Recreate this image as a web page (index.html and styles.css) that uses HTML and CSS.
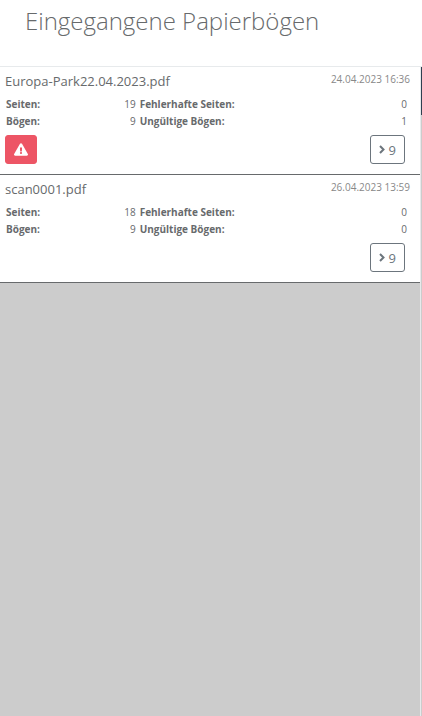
FILE: index.html
```
<!DOCTYPE html>
<html lang="de">

<head>
    <meta charset="UTF-8">
    <meta name="viewport" content="width=device-width, initial-scale=1.0">
    <title>Eingegangene Papierbögen</title>
    <link rel="stylesheet" href="styles.css">
</head>

<body>
    <header class="page-heading">
        <h2>Eingegangene Papierbögen</h2>
    </header>

    <main class="content">
        <div class="scan-list">
            <article class="scan">
                <div class="scan-title">
                    <h3>Europa-Park22.04.2023.pdf</h3>
                    <time datetime="2023-04-24T16:36">24.04.2023 16:36</time>
                </div>
                <table class="scan-stats">
                    <tr>
                        <th scope="row">Seiten:</th>
                        <td>19</td>
                        <th scope="row">Fehlerhafte Seiten:</th>
                        <td>0</td>
                    </tr>
                    <tr>
                        <th scope="row">Bögen:</th>
                        <td>9</td>
                        <th scope="row">Ungültige Bögen:</th>
                        <td>1</td>
                    </tr>
                </table>
                <div class="scan-actions">
                    <button class="btn btn-danger" type="button" aria-label="Fehler anzeigen">
                        <svg class="icon-warning" viewBox="0 0 576 512" aria-hidden="true">
                            <path d="M569.5 440c18.500 32-4.700 72-41.600 72H48.100c-36.900 0-60-40.100-41.600-72L246.400 24c18.500-32 64.700-32 83.200 0zM288 354a46 46 0 1 0 0 92 46 46 0 0 0 0-92zm-43.700-165.300l7.400 136c.4 6.400 5.600 11.300 12 11.300h48.600c6.400 0 11.600-5 12-11.300l7.400-136c.4-6.900-5.100-12.700-12-12.700h-63.400c-6.900 0-12.400 5.800-12 12.700z" />
                        </svg>
                    </button>
                    <button class="btn btn-outline" type="button">
                        <svg class="icon-chevron" viewBox="0 0 6 9" aria-hidden="true">
                            <path d="M1 1l3.500 3.500L1 8" />
                        </svg>
                        9
                    </button>
                </div>
            </article>

            <article class="scan">
                <div class="scan-title">
                    <h3>scan0001.pdf</h3>
                    <time datetime="2023-04-26T13:59">26.04.2023 13:59</time>
                </div>
                <table class="scan-stats">
                    <tr>
                        <th scope="row">Seiten:</th>
                        <td>18</td>
                        <th scope="row">Fehlerhafte Seiten:</th>
                        <td>0</td>
                    </tr>
                    <tr>
                        <th scope="row">Bögen:</th>
                        <td>9</td>
                        <th scope="row">Ungültige Bögen:</th>
                        <td>0</td>
                    </tr>
                </table>
                <div class="scan-actions">
                    <button class="btn btn-outline" type="button">
                        <svg class="icon-chevron" viewBox="0 0 6 9" aria-hidden="true">
                            <path d="M1 1l3.500 3.500L1 8" />
                        </svg>
                        9
                    </button>
                </div>
            </article>
        </div>
        <div class="preview">
            <div class="preview-toolbar"></div>
        </div>
    </main>
</body>

</html>
```

FILE: styles.css
```
:root {
    --text: #676a6c;
    --muted: #888888;
    --border: #e7eaec;
    --outline: #6c757d;
    --danger: #ed5565;
    --navy: #2f4050;
    --backdrop: #cccccc;
}

* {
    box-sizing: border-box;
}

body {
    display: flex;
    flex-direction: column;
    min-height: 100vh;
    margin: 0;
    font-family: "Open Sans", "Helvetica", "Arial", sans-serif;
    font-size: 13px;
    line-height: 20px;
    color: var(--text);
    background-color: #fff;
}

.page-heading {
    padding: 6px 25px 30px;
    border-bottom: 1px solid var(--border);
}

.page-heading h2 {
    margin: 0;
    font-size: 24px;
    font-weight: 300;
    line-height: 30px;
}

.content {
    display: flex;
    flex: 1;
    background-color: var(--backdrop);
}

.scan-list {
    flex: 1;
}

.scan {
    padding: 4px 10px 10px 5px;
    border-bottom: 1px solid var(--text);
    background-color: #fff;
}

.scan-title {
    display: flex;
    justify-content: space-between;
}

.scan-title h3 {
    margin: 0;
    font-size: 13px;
    font-weight: 400;
}

.scan-title time {
    font-size: 10px;
    line-height: 16px;
    color: var(--muted);
}

.scan-stats {
    width: 100%;
    margin-top: 5px;
    border-collapse: collapse;
    table-layout: fixed;
    font-size: 10px;
    line-height: 15px;
}

.scan-stats th,
.scan-stats td {
    padding: 1px;
    text-align: left;
}

.scan-stats th:first-child {
    width: 18%;
}

.scan-stats td:nth-child(2) {
    width: 15%;
}

.scan-stats td {
    padding-right: 3px;
    text-align: right;
}

.scan-actions {
    display: flex;
    margin-top: 5px;
    padding-right: 5px;
}

.btn {
    display: flex;
    align-items: center;
    justify-content: center;
    gap: 4px;
    height: 29px;
    padding: 0 8px;
    border: 1px solid;
    border-radius: 3px;
    font: inherit;
}

.btn-danger {
    border-color: var(--danger);
    background-color: var(--danger);
    color: #fff;
}

.btn-outline {
    margin-left: auto;
    border-color: var(--outline);
    background-color: transparent;
    color: var(--outline);
}

.icon-warning {
    width: 14px;
    height: 13px;
    fill: currentColor;
}

.icon-chevron {
    width: 6px;
    height: 9px;
    fill: none;
    stroke: currentColor;
    stroke-width: 2;
}

.preview {
    width: 2px;
    border-left: 1px solid var(--border);
}

.preview-toolbar {
    height: 48px;
    background-color: var(--navy);
}
```
